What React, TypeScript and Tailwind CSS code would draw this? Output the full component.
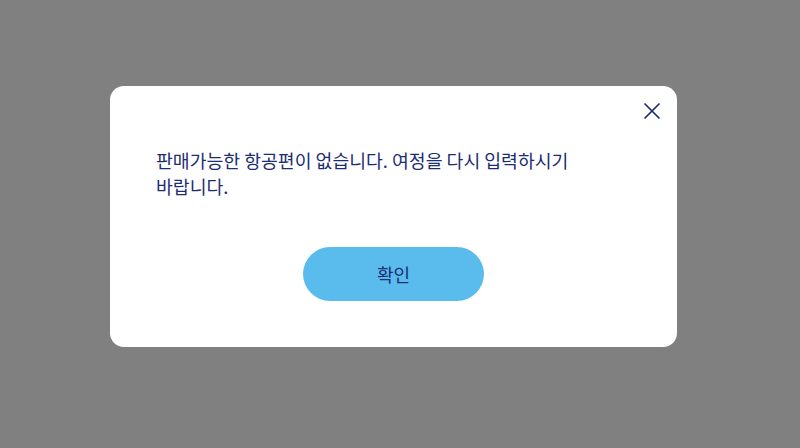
export default function App() {
  return (
    <div
      className="h-[448px] w-full bg-[#808080] pl-[110px] pt-[86px]"
      style={{ fontFamily: '"Noto Sans CJK KR", "Noto Sans", sans-serif' }}
    >
      <div className="relative w-[567px] rounded-[14px] bg-white px-[46px] pb-[46px] pt-[61px]">
        <button className="absolute left-[534px] top-[17px] text-[#1c2d72]">
          <svg width="16" height="16" viewBox="0 0 16 16" fill="none" stroke="currentColor" strokeWidth="1.7" strokeLinecap="round">
            <path d="M1 1L15 15M15 1L1 15" />
          </svg>
        </button>
        <p className="max-w-[460px] break-keep text-[18.3px] leading-[26px] text-[#1c2d72]">
          판매가능한 항공편이 없습니다. 여정을 다시 입력하시기 바랍니다.
        </p>
        <div className="mt-[48px] flex justify-center">
          <button className="h-[54px] w-[181px] rounded-full bg-[#5abcec] text-[18px] text-[#1c2d72]">
            확인
          </button>
        </div>
      </div>
    </div>
  );
}
